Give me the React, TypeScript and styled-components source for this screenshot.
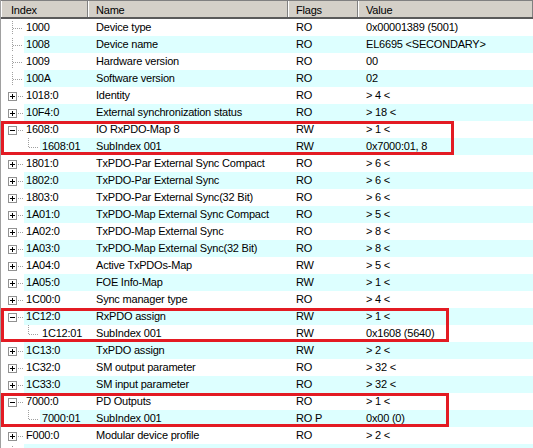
import React from 'react'
import styled, { createGlobalStyle } from 'styled-components'

type Kind = 'leaf' | 'plus' | 'minus' | 'sub'

interface Entry {
  index: string
  name: string
  flags: string
  value: string
  kind: Kind
}

const entries: Entry[] = [
  { index: '1000', name: 'Device type', flags: 'RO', value: '0x00001389 (5001)', kind: 'leaf' },
  { index: '1008', name: 'Device name', flags: 'RO', value: 'EL6695 <SECONDARY>', kind: 'leaf' },
  { index: '1009', name: 'Hardware version', flags: 'RO', value: '00', kind: 'leaf' },
  { index: '100A', name: 'Software version', flags: 'RO', value: '02', kind: 'leaf' },
  { index: '1018:0', name: 'Identity', flags: 'RO', value: '> 4 <', kind: 'plus' },
  { index: '10F4:0', name: 'External synchronization status', flags: 'RO', value: '> 18 <', kind: 'plus' },
  { index: '1608:0', name: 'IO RxPDO-Map 8', flags: 'RW', value: '> 1 <', kind: 'minus' },
  { index: '1608:01', name: 'SubIndex 001', flags: 'RW', value: '0x7000:01, 8', kind: 'sub' },
  { index: '1801:0', name: 'TxPDO-Par External Sync Compact', flags: 'RO', value: '> 6 <', kind: 'plus' },
  { index: '1802:0', name: 'TxPDO-Par External Sync', flags: 'RO', value: '> 6 <', kind: 'plus' },
  { index: '1803:0', name: 'TxPDO-Par External Sync(32 Bit)', flags: 'RO', value: '> 6 <', kind: 'plus' },
  { index: '1A01:0', name: 'TxPDO-Map External Sync Compact', flags: 'RO', value: '> 5 <', kind: 'plus' },
  { index: '1A02:0', name: 'TxPDO-Map External Sync', flags: 'RO', value: '> 8 <', kind: 'plus' },
  { index: '1A03:0', name: 'TxPDO-Map External Sync(32 Bit)', flags: 'RO', value: '> 8 <', kind: 'plus' },
  { index: '1A04:0', name: 'Active TxPDOs-Map', flags: 'RW', value: '> 5 <', kind: 'plus' },
  { index: '1A05:0', name: 'FOE Info-Map', flags: 'RW', value: '> 1 <', kind: 'plus' },
  { index: '1C00:0', name: 'Sync manager type', flags: 'RO', value: '> 4 <', kind: 'plus' },
  { index: '1C12:0', name: 'RxPDO assign', flags: 'RW', value: '> 1 <', kind: 'minus' },
  { index: '1C12:01', name: 'SubIndex 001', flags: 'RW', value: '0x1608 (5640)', kind: 'sub' },
  { index: '1C13:0', name: 'TxPDO assign', flags: 'RW', value: '> 2 <', kind: 'plus' },
  { index: '1C32:0', name: 'SM output parameter', flags: 'RO', value: '> 32 <', kind: 'plus' },
  { index: '1C33:0', name: 'SM input parameter', flags: 'RO', value: '> 32 <', kind: 'plus' },
  { index: '7000:0', name: 'PD Outputs', flags: 'RO', value: '> 1 <', kind: 'minus' },
  { index: '7000:01', name: 'SubIndex 001', flags: 'RO P', value: '0x00 (0)', kind: 'sub' },
  { index: 'F000:0', name: 'Modular device profile', flags: 'RO', value: '> 2 <', kind: 'plus' },
  // next row is scrolled almost out of view: only its stripe shows
  { index: '', name: '', flags: '', value: '', kind: 'leaf' },
]

// red marks drawn over the list (first row, last row, right edge)
const marks = [
  { from: 6, to: 7, right: 453 },
  { from: 17, to: 18, right: 448 },
  { from: 22, to: 23, right: 448 },
]

const HEADER_H = 19
const ROW_H = 17

const GlobalStyle = createGlobalStyle`
  html, body {
    margin: 0;
    padding: 0;
    background: #fff;
    overflow: hidden;
  }
  body {
    font-family: 'Liberation Sans', Arial, sans-serif;
    font-size: 11px;
    letter-spacing: -0.2px;
    color: #000;
  }
`

function TreeGlyph({ kind }: { kind: Kind }) {
  const dot = '#a0a0a0'
  if (kind === 'sub') {
    return (
      <svg width={39} height={ROW_H}>
        <line x1={27.5} y1={0} x2={27.5} y2={9} stroke={dot} strokeDasharray="1 1" />
        <line x1={28} y1={9.5} x2={38} y2={9.5} stroke={dot} strokeDasharray="1 1" />
      </svg>
    )
  }
  if (kind === 'leaf') {
    return (
      <svg width={23} height={ROW_H}>
        <line x1={11.5} y1={2} x2={11.5} y2={15} stroke={dot} strokeDasharray="1 1" />
        <line x1={12} y1={9.5} x2={22} y2={9.5} stroke={dot} strokeDasharray="1 1" />
      </svg>
    )
  }
  return (
    <svg width={23} height={ROW_H}>
      <rect x={7.5} y={5.5} width={8} height={8} fill="#fff" stroke="#919191" />
      <line x1={9} y1={9.5} x2={14} y2={9.5} stroke="#000" />
      {kind === 'plus' && <line x1={11.5} y1={7} x2={11.5} y2={12} stroke="#000" />}
      <line x1={17} y1={9.5} x2={22} y2={9.5} stroke={dot} strokeDasharray="1 1" />
    </svg>
  )
}

function App() {
  return (
    <>
      <GlobalStyle />
      <List>
        <Header>
          <HeaderCell $w={87} $pad={9}>Index</HeaderCell>
          <HeaderCell $w={200}>Name</HeaderCell>
          <HeaderCell $w={70}>Flags</HeaderCell>
          <HeaderCell $grow>Value</HeaderCell>
        </Header>
        {entries.map((e, i) => {
          const indent = e.kind === 'sub' ? 39 : 23
          return (
            <Row key={e.index + i}>
              <Gutter $w={indent}>
                <TreeGlyph kind={e.kind} />
              </Gutter>
              <RowBody $alt={i % 2 === 1}>
                <Cell $w={87 - indent} $pad={2}>{e.index}</Cell>
                <Cell $w={200}>{e.name}</Cell>
                <Cell $w={70}>{e.flags}</Cell>
                <Cell $grow>{e.value}</Cell>
              </RowBody>
            </Row>
          )
        })}
        {marks.map((m) => (
          <Mark
            key={m.from}
            $top={HEADER_H + m.from * ROW_H}
            $height={(m.to - m.from + 1) * ROW_H}
            $width={m.right}
          />
        ))}
      </List>
    </>
  )
}

export default App

const List = styled.div`
  position: relative;
  width: 533px;
  height: 448px;
  overflow: hidden;
  border-left: 1px solid #a0a0a0;
  box-sizing: border-box;
`

const Header = styled.div`
  display: flex;
  height: ${HEADER_H}px;
  box-sizing: border-box;
  background: #d4d0c8;
  border-top: 1px solid #808080;
  border-bottom: 2px solid #5a5a5a;
`

const HeaderCell = styled.div<{ $w?: number; $pad?: number; $grow?: boolean }>`
  width: ${(p) => (p.$w ? `${p.$w}px` : 'auto')};
  flex: ${(p) => (p.$grow ? '1' : 'none')};
  padding-left: ${(p) => p.$pad ?? 7}px;
  padding-top: 2px;
  box-sizing: border-box;
  line-height: 14px;
  white-space: nowrap;
  border-left: 1px solid #fff;
  border-right: 1px solid #808080;
`

const Row = styled.div`
  display: flex;
  height: ${ROW_H}px;
`

const Gutter = styled.div<{ $w: number }>`
  width: ${(p) => p.$w}px;
  flex: none;
  display: flex;
  justify-content: flex-end;
  svg {
    display: block;
  }
`

const RowBody = styled.div<{ $alt: boolean }>`
  flex: 1;
  display: flex;
  background: ${(p) => (p.$alt ? '#ddffff' : '#fff')};
`

const Cell = styled.div<{ $w?: number; $pad?: number; $grow?: boolean }>`
  width: ${(p) => (p.$w ? `${p.$w}px` : 'auto')};
  flex: ${(p) => (p.$grow ? '1' : 'none')};
  padding-left: ${(p) => p.$pad ?? 8}px;
  box-sizing: border-box;
  line-height: ${ROW_H}px;
  white-space: nowrap;
  overflow: hidden;
`

const Mark = styled.div<{ $top: number; $height: number; $width: number }>`
  position: absolute;
  left: 0;
  top: ${(p) => p.$top}px;
  width: ${(p) => p.$width}px;
  height: ${(p) => p.$height}px;
  box-sizing: border-box;
  border: 3px solid #e31b23;
  pointer-events: none;
`
